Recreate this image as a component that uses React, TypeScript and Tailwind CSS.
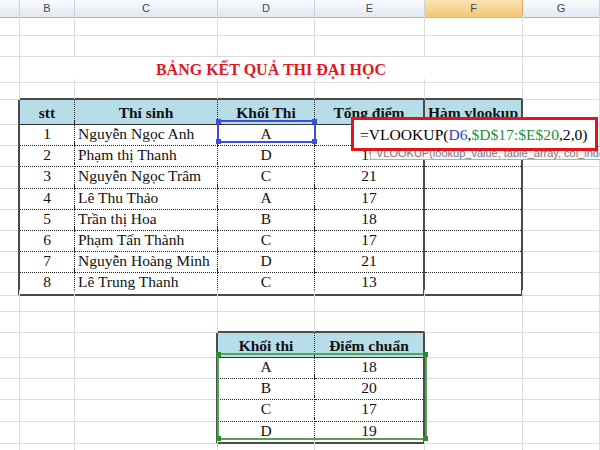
import React from "react";

const GRID = "grid grid-cols-[20px_55px_143px_97px_110px_98px_77px]";
const COLS = ["A", "B", "C", "D", "E", "F", "G"];

const students = [
  { stt: "1", name: "Nguyễn Ngọc Anh", khoi: "A", diem: "18" },
  { stt: "2", name: "Phạm thị Thanh", khoi: "D", diem: "19" },
  { stt: "3", name: "Nguyễn Ngọc Trâm", khoi: "C", diem: "21" },
  { stt: "4", name: "Lê Thu Thảo", khoi: "A", diem: "17" },
  { stt: "5", name: "Trần thị Hoa", khoi: "B", diem: "18" },
  { stt: "6", name: "Phạm Tấn Thành", khoi: "C", diem: "17" },
  { stt: "7", name: "Nguyễn Hoàng Minh", khoi: "D", diem: "21" },
  { stt: "8", name: "Lê Trung Thanh", khoi: "C", diem: "13" },
];

const diemChuan = [
  ["A", "18"],
  ["B", "20"],
  ["C", "17"],
  ["D", "19"],
];

const DARK_R = "border-r-2 border-r-[#4a4a4a]";
const DOT_R = "border-r border-r-[#222] [border-right-style:dotted]";
const GRID_R = "border-r border-r-[#dadcdd]";
const DARK_B = "border-b-2 border-b-[#4a4a4a]";
const DOT_B = "border-b border-b-[#222] [border-bottom-style:dotted]";
const SOLID_B = "border-b border-b-[#333]";
const GRID_B = "border-b border-b-[#dadcdd]";

const inMain = (r: number, c: number) => r >= 5 && r <= 13 && c >= 1 && c <= 5;
const inLow = (r: number, c: number) => r >= 16 && r <= 20 && c >= 3 && c <= 4;

function rightCls(r: number, c: number) {
  if (inMain(r, c)) return c >= 4 ? DARK_R : DOT_R;
  if (r >= 5 && r <= 13 && c === 0) return DARK_R;
  if (inLow(r, c)) return c === 4 ? DARK_R : DOT_R;
  if (r >= 16 && r <= 20 && c === 2) return DARK_R;
  return GRID_R;
}

function bottomCls(r: number, c: number) {
  if (r === 4 && c >= 1 && c <= 5) return DARK_B;
  if (inMain(r, c)) {
    if (r === 13) return DARK_B;
    if (r === 5) return SOLID_B;
    return DOT_B;
  }
  if (r === 15 && c >= 3 && c <= 4) return DARK_B;
  if (inLow(r, c)) {
    if (r === 20) return DARK_B;
    if (r === 16) return SOLID_B;
    return DOT_B;
  }
  return GRID_B;
}

function content(r: number, c: number): string | null {
  if (r === 5) return [null, "stt", "Thí sinh", "Khối Thi", "Tổng điểm", "Hàm vlookup", null][c];
  if (r >= 6 && r <= 13) {
    const s = students[r - 6];
    return [null, s.stt, s.name, s.khoi, s.diem, null, null][c];
  }
  if (r === 16) return c === 3 ? "Khối thi" : c === 4 ? "Điểm chuẩn" : null;
  if (r >= 17 && r <= 20) {
    const k = diemChuan[r - 17];
    return c === 3 ? k[0] : c === 4 ? k[1] : null;
  }
  return null;
}

function Cell({ r, c }: { r: number; c: number }) {
  const text = content(r, c);
  const isHeader = (r === 5 && inMain(r, c)) || (r === 16 && inLow(r, c));
  const leftAlign = (r >= 6 && r <= 13 && c === 2) || (r === 5 && c === 5);
  return (
    <div
      className={[
        "h-full flex items-center whitespace-nowrap overflow-visible pt-[1px]",
        rightCls(r, c),
        bottomCls(r, c),
        isHeader ? "bg-[#b7dee8] font-bold" : "",
        leftAlign ? "justify-start pl-[3px]" : "justify-center",
      ].join(" ")}
    >
      {text}
    </div>
  );
}

function SelectionHandles({ color }: { color: string }) {
  return (
    <>
      <span className={`absolute -left-[3px] -top-[3px] w-[5px] h-[5px] ${color}`} />
      <span className={`absolute -right-[3px] -top-[3px] w-[5px] h-[5px] ${color}`} />
      <span className={`absolute -left-[3px] -bottom-[3px] w-[5px] h-[5px] ${color}`} />
      <span className={`absolute -right-[3px] -bottom-[3px] w-[5px] h-[5px] ${color}`} />
    </>
  );
}

export default function App() {
  const rows = Array.from({ length: 21 }, (_, i) => i + 1);

  return (
    <div className="relative w-[600px] h-[450px] overflow-hidden bg-white font-['Liberation_Serif',serif] text-[15.5px] text-[#111]">
      {/* column letters */}
      <div className={`${GRID} h-[15px] font-['Liberation_Sans',sans-serif] text-[11px] text-[#3a4a5e]`}>
        {COLS.map((L, i) =>
          i === 5 ? (
            <div
              key={L}
              className="flex items-center justify-center border-r border-r-[#e0b060] border-b border-b-[#eeb250] bg-linear-to-b from-[#fbe3b4] to-[#f3c670]"
            >
              {L}
            </div>
          ) : (
            <div
              key={L}
              className="flex items-center justify-center border-r border-r-[#c8d3e2] border-b border-b-[#9eb6ce] bg-linear-to-b from-[#f9fbfd] to-[#e2e8f1]"
            >
              {i === 0 ? "" : L}
            </div>
          )
        )}
      </div>

      {/* sheet rows */}
      {rows.map((r) =>
        r === 3 ? (
          <div key={r} className={`${GRID} h-[21.2px]`}>
            <div className={`${GRID_R} ${GRID_B}`} />
            <div className={`col-span-5 flex items-center justify-center pt-[1px] ${GRID_R} ${GRID_B} text-[16px] font-bold text-[#e3161e]`}>
              BẢNG KẾT QUẢ THI ĐẠI HỌC
            </div>
            <div className={`${GRID_R} ${GRID_B}`} />
          </div>
        ) : (
          <div key={r} className={`${GRID} h-[21.2px]`}>
            {COLS.map((_, c) => (
              <Cell key={c} r={r} c={c} />
            ))}
          </div>
        )
      )}

      {/* D6 reference highlight */}
      <div className="absolute left-[217px] top-[120px] w-[99px] h-[23px] border-2 border-[#3c4de0]">
        <SelectionHandles color="bg-[#3c4de0]" />
      </div>

      {/* lookup range highlight */}
      <div className="absolute left-[217px] top-[353px] w-[210px] h-[87px] border-2 border-[#52a352]">
        <SelectionHandles color="bg-[#2f8a2f]" />
      </div>

      {/* function tooltip */}
      <div className="absolute left-[370px] top-[146px] w-[240px] h-[14px] border border-[#b0b0b0] bg-[#f7f7f7] pl-[5px] font-['Liberation_Sans',sans-serif] text-[11px] leading-[12px] text-[#777] whitespace-nowrap">
        VLOOKUP(lookup_value, table_array, col_index_num, [range_lookup])
      </div>

      {/* formula being edited */}
      <div className="absolute left-[351px] top-[117px] w-[247px] h-[34px] border-[3px] border-[#e3141b] bg-white flex items-center pl-[6px] pt-[1px] text-[15.6px] text-black whitespace-nowrap">
        =VLOOKUP(<span className="text-[#3344cc]">D6</span>,<span className="text-[#1f8f3a]">$D$17:$E$20</span>,2,0)
      </div>
    </div>
  );
}
